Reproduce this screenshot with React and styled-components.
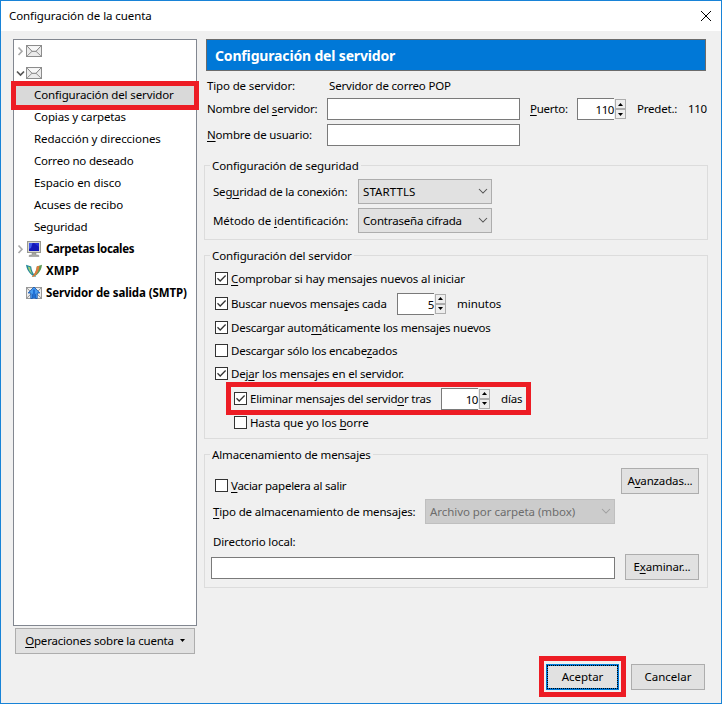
import React from 'react';
import styled, { createGlobalStyle } from 'styled-components';

const GlobalStyle = createGlobalStyle`
  * { box-sizing: border-box; }
  body { margin: 0; }
`;

const Window = styled.div`
  width: 722px;
  height: 704px;
  display: flex;
  flex-direction: column;
  background: #f0f0f0;
  border: 1px solid #1883d7;
  color: #000;
  font: 11.5px/16px 'Noto Sans', 'Open Sans', sans-serif;
  overflow: hidden;
`;

const TitleBar = styled.header`
  display: flex;
  justify-content: space-between;
  align-items: center;
  flex: none;
  height: 30px;
  padding: 0 9px 0 8px;
  background: #fff;
`;

const Text = styled.span`
  display: inline-block;
  flex: none;
  white-space: pre;
  letter-spacing: ${(p) => (p.$ls || 0) - 0.03}px;
  width: ${(p) => (p.$w ? `${p.$w}px` : 'auto')};
  margin-left: ${(p) => p.$ml || 0}px;
`;

const Key = styled.span`
  text-decoration: underline;
  text-decoration-thickness: 1px;
  text-underline-offset: 2px;
  text-decoration-skip-ink: none;
`;

const Content = styled.div`
  display: flex;
  flex: none;
  gap: 7px;
  height: 623px;
  padding: 8px 0 0 12px;
`;

const Sidebar = styled.nav`
  width: 184px;
  display: flex;
  flex-direction: column;
  gap: 2px;
`;

const Tree = styled.div`
  height: 587px;
  border: 1px solid #828790;
  background: #fff;
`;

const TreeRow = styled.div`
  position: relative;
  display: flex;
  align-items: center;
  height: 22px;
  padding-left: ${(p) => (p.$child ? 20 : 2)}px;
  background: ${(p) => (p.$selected ? '#d9d9d9' : 'transparent')};
  font-weight: ${(p) => (p.$strong ? 700 : 400)};
`;

const Twisty = styled.span`
  display: flex;
  width: 10px;
  height: 12px;
`;

const TreeIcon = styled.span`
  display: flex;
  width: 16px;
  height: 16px;
  margin-right: 4px;
`;

const Highlight = styled.div`
  position: absolute;
  inset: ${(p) => p.$inset};
  border: 5px solid #ed1c24;
  pointer-events: none;
`;

const Button = styled.button`
  position: relative;
  display: flex;
  align-items: center;
  justify-content: center;
  flex: none;
  width: ${(p) => p.$w}px;
  height: 26px;
  margin: 0 0 0 ${(p) => p.$ml || 0}px;
  padding: 0;
  border: ${(p) => (p.$focused ? '2px solid #0078d7' : '1px solid #adadad')};
  background: #e1e1e1;
  color: #000;
  font: inherit;
`;

const MenuArrow = styled.span`
  display: flex;
  margin: 0 0 1px 6px;
`;

const FocusRing = styled.span`
  position: absolute;
  inset: -1px;
  border: 1px dotted #000;
`;

const Main = styled.main`
  width: 504px;
`;

const Banner = styled.h1`
  display: flex;
  align-items: center;
  height: 32px;
  margin: 0 2px;
  padding: 2px 0 0 8px;
  border: 1px solid #6b6b6b;
  background: #0078d7;
  color: #fff;
  font-size: 14px;
  font-weight: 700;
  line-height: 20px;
`;

const Row = styled.div`
  position: relative;
  display: flex;
  align-items: ${(p) => p.$align || 'center'};
  height: ${(p) => p.$h}px;
  margin-top: ${(p) => p.$mt || 0}px;
  padding-left: ${(p) => p.$pl || 0}px;
`;

const Input = styled.input`
  flex: none;
  width: ${(p) => p.$w}px;
  height: 22px;
  margin: ${(p) => p.$mt || 0}px 0 0;
  padding: 0 3px;
  border: 1px solid #7a7a7a;
  border-radius: 0;
  background: #fff;
  font: inherit;
`;

const SpinnerBox = styled.span`
  display: flex;
  flex: none;
  align-items: center;
  gap: 1px;
  height: 22px;
`;

const SpinnerValue = styled.span`
  width: 37px;
  height: 22px;
  padding: 3px 0 0;
  border: 1px solid #7a7a7a;
  border-right: 0;
  background: #fff;
  text-align: right;
  letter-spacing: -0.4px;
`;

const SpinnerButtons = styled.span`
  display: flex;
  flex-direction: column;
`;

const SpinnerButton = styled.span`
  display: flex;
  align-items: center;
  justify-content: center;
  width: 11px;
  height: 10px;
  border: 1px solid #adadad;
  background: #eee;
`;

const Group = styled.section`
  height: ${(p) => p.$h}px;
  margin-top: ${(p) => p.$mt}px;
  border: 1px solid #dcdcdc;
`;

const Legend = styled.div`
  width: fit-content;
  height: 16px;
  margin: -8px 0 0 5px;
  padding: 0 2px;
  background: #f0f0f0;
`;

const SelectBox = styled.div`
  display: flex;
  align-items: center;
  justify-content: space-between;
  flex: none;
  width: ${(p) => p.$w}px;
  height: 25px;
  padding: 0 3px 0 4px;
  border: 1px solid ${(p) => (p.$disabled ? '#bfbfbf' : '#adadad')};
  background: ${(p) => (p.$disabled ? '#ccc' : '#e1e1e1')};
  color: ${(p) => (p.$disabled ? '#6d6d6d' : '#000')};
`;

const ChevronSlot = styled.span`
  display: flex;
  margin-bottom: 2px;
`;

const Box = styled.span`
  display: flex;
  flex: none;
  width: 13px;
  height: 13px;
  margin-right: 3px;
  border: 1px solid #333;
  background: #fff;
`;

const Footer = styled.footer`
  display: flex;
  justify-content: flex-end;
  gap: 12px;
  margin-top: 10px;
  padding-right: 16px;
`;

const FooterItem = styled.div`
  position: relative;
`;

const CloseIcon = () => (
  <svg width="12" height="12" viewBox="0 0 12 12">
    <path d="M1 1l10 10M11 1L1 11" stroke="#000" strokeWidth="1" fill="none" />
  </svg>
);

const TwistyIcon = ({ open }) => (
  <svg width="10" height="12" viewBox="0 0 10 12">
    {open ? (
      <path d="M1 4.5L4.5 8 8 4.5" stroke="#555" strokeWidth="1.7" fill="none" />
    ) : (
      <path d="M2.5 2.5L6 6.2 2.5 10" stroke="#a8a8a8" strokeWidth="1.6" fill="none" />
    )}
  </svg>
);

const MailIcon = () => (
  <svg width="16" height="16" viewBox="0 0 16 16">
    <rect x="0.5" y="2.5" width="15" height="11" fill="#ebebeb" stroke="#8c8c8c" />
    <path d="M1.2 3.2L6 8h4l4.800-4.800z" fill="#f7f7f7" />
    <path d="M1.200 3.200L6 8.300h4l4.800-5.100" fill="none" stroke="#808080" strokeWidth="1" />
    <path d="M1.200 12.800L6 8.300M14.800 12.800L10 8.300" stroke="#909090" strokeWidth="1" />
  </svg>
);

const ComputerIcon = () => (
  <svg width="16" height="16" viewBox="0 0 16 16">
    <rect x="1.5" y="0.5" width="13" height="11" fill="#d6d6cf" stroke="#9a9a92" />
    <rect x="3" y="2" width="10" height="8" fill="#1418b8" />
    <path d="M3 2h3.500l-1.500 5-2 1z" fill="#4058e8" />
    <path d="M8 2h5v4z" fill="#2430d8" />
    <path d="M6 12h4v2h2.500l.5 1.500H3l.5-1.500H6z" fill="#aaaaa5" stroke="#888" strokeWidth="0.5" />
  </svg>
);

const XmppIcon = () => (
  <svg width="16" height="16" viewBox="0 0 16 16">
    <path d="M0 1.800l5.200 1.800c.3 4 1.800 7.200 5 10.400C5.500 13.300 1 8.500 0 1.800z" fill="#23869a" />
    <path d="M1.800 3.500l2.400.8c.3 3 1.200 5.200 2.600 7.200C4.300 9.800 2.500 7 1.800 3.500z" fill="#9fcf73" />
    <path d="M16 1.800l-5.200 1.800c-.3 4-1.800 7.200-5 10.400C11 13.300 15.300 8.500 16 1.800z" fill="#5d9a55" />
    <path d="M10.800 3.600l2.600-.9c-.2 4.300-2 8-5.400 10.700l-2.200.6c3.200-3.200 4.700-6.400 5-10.400z" fill="#e4793c" />
  </svg>
);

const SmtpIcon = () => (
  <svg width="16" height="16" viewBox="0 0 16 16">
    <rect x="0.5" y="2.5" width="15" height="11" fill="#ececec" stroke="#999" />
    <path d="M.8 3L5 7M15.200 3L11 7M.8 13L5 9M15.200 13L11 9" stroke="#888" strokeWidth="0.9" />
    <path d="M8 2l5.800 6h-2.600v5.500H9.500V9.200h-3v4.300H4.800V8H2.200z" fill="#4da0f2" stroke="#1558b4" strokeWidth="0.9" />
    <path d="M8 4.500v9" stroke="#1f6fd6" strokeWidth="2.200" />
  </svg>
);

const CheckMark = () => (
  <svg width="11" height="11" viewBox="0 0 11 11">
    <path d="M1.500 5.300L4.200 8 9.600 2.500" stroke="#333" strokeWidth="1.250" fill="none" />
  </svg>
);

const Chevron = ({ color }) => (
  <svg width="10" height="6" viewBox="0 0 10 6">
    <path d="M1 1l4 4 4-4" stroke={color} strokeWidth="1.050" fill="none" />
  </svg>
);

const Arrow = ({ up }) => (
  <svg width="5" height="3" viewBox="0 0 5 3">
    <path d={up ? 'M0 3L2.500 0 5 3z' : 'M0 0h5L2.500 3z'} fill="#000" />
  </svg>
);

const Spinner = ({ value }) => (
  <SpinnerBox>
    <SpinnerValue>{value}</SpinnerValue>
    <SpinnerButtons>
      <SpinnerButton><Arrow up /></SpinnerButton>
      <SpinnerButton><Arrow /></SpinnerButton>
    </SpinnerButtons>
  </SpinnerBox>
);

const Select = ({ w, ls, disabled, children }) => (
  <SelectBox $w={w} $disabled={disabled}>
    <Text $ls={ls}>{children}</Text>
    <ChevronSlot><Chevron color={disabled ? '#9f9f9f' : '#505050'} /></ChevronSlot>
  </SelectBox>
);

const Checkbox = ({ checked, w, ls, children }) => (
  <>
    <Box>{checked && <CheckMark />}</Box>
    <Text $ls={ls} $w={w}>{children}</Text>
  </>
);

const sections = [
  ['Copias y carpetas', -0.12],
  ['Redacción y direcciones', -0.03],
  ['Correo no deseado', -0.18],
  ['Espacio en disco', -0.06],
  ['Acuses de recibo', -0.06],
  ['Seguridad', -0.2],
];

const accounts = [
  ['Carpetas locales', -0.32, ComputerIcon, true],
  ['XMPP', 0.1, XmppIcon, false],
  ['Servidor de salida (SMTP)', -0.08, SmtpIcon, false],
];

export default function App() {
  return (
    <>
      <GlobalStyle />
      <Window>
        <TitleBar>
          <Text $ls={-0.05}>Configuración de la cuenta</Text>
          <CloseIcon />
        </TitleBar>

        <Content>
          <Sidebar>
            <Tree>
              <TreeRow>
                <Twisty><TwistyIcon /></Twisty>
                <TreeIcon><MailIcon /></TreeIcon>
              </TreeRow>
              <TreeRow>
                <Twisty><TwistyIcon open /></Twisty>
                <TreeIcon><MailIcon /></TreeIcon>
              </TreeRow>
              <TreeRow $child $selected>
                <Text $ls={-0.09}>Configuración del servidor</Text>
                <Highlight $inset="-3px -3px -4px -3px" />
              </TreeRow>
              {sections.map(([name, ls]) => (
                <TreeRow key={name} $child>
                  <Text $ls={ls}>{name}</Text>
                </TreeRow>
              ))}
              {accounts.map(([name, ls, Icon, expandable]) => (
                <TreeRow key={name} $strong>
                  <Twisty>{expandable && <TwistyIcon />}</Twisty>
                  <TreeIcon><Icon /></TreeIcon>
                  <Text $ls={ls}>{name}</Text>
                </TreeRow>
              ))}
            </Tree>
            <Button $w={180} $ml={2}>
              <Text $ls={-0.16}><Key>O</Key>peraciones sobre la cuenta</Text>
              <MenuArrow><Arrow /></MenuArrow>
            </Button>
          </Sidebar>

          <Main>
            <Banner><Text $ls={-0.13}>Configuración del servidor</Text></Banner>

            <Row $h={22} $mt={4} $pl={3}>
              <Text $w={122} $ls={-0.11}>Tipo de servidor:</Text>
              <Text $ls={-0.15}>Servidor de correo POP</Text>
            </Row>
            <Row $h={22} $mt={1} $pl={3}>
              <Text $w={120} $ls={-0.17}>Nombre del <Key>s</Key>ervidor:</Text>
              <Input $w={193} />
              <Text $w={47} $ml={10} $ls={-0.21}><Key>P</Key>uerto:</Text>
              <Spinner value="110" />
              <Text $w={51} $ml={11} $ls={-0.17}>Predet.:</Text>
              <Text $ls={-0.35}>110</Text>
            </Row>
            <Row $h={22} $mt={4} $pl={3}>
              <Text $w={120} $ls={-0.14}><Key>N</Key>ombre de usuario:</Text>
              <Input $w={193} />
            </Row>

            <Group $h={75} $mt={19}>
              <Legend><Text $ls={-0.1}>Configuración de seguridad</Text></Legend>
              <Row $h={25} $mt={5} $pl={8}>
                <Text $w={145} $ls={-0.17}>Seg<Key>u</Key>ridad de la conexión:</Text>
                <Select w={134} ls={0.12}>STARTTLS</Select>
              </Row>
              <Row $h={25} $mt={4} $pl={8}>
                <Text $w={145} $ls={-0.03}>Método de <Key>i</Key>dentificación:</Text>
                <Select w={134} ls={-0.14}>Contraseña cifrada</Select>
              </Row>
            </Group>

            <Group $h={184} $mt={15}>
              <Legend><Text $ls={-0.09}>Configuración del servidor</Text></Legend>
              <Row $h={21} $mt={4} $pl={10}>
                <Checkbox checked ls={-0.11}><Key>C</Key>omprobar si hay mensajes nuevos al iniciar</Checkbox>
              </Row>
              <Row $h={23} $mt={3} $pl={10}>
                <Checkbox checked w={166} ls={-0.18}>Buscar nuevos mensa<Key>j</Key>es cada</Checkbox>
                <Spinner value="5" />
                <Text $ml={11} $ls={-0.01}>minutos</Text>
              </Row>
              <Row $h={21} $mt={2} $pl={10}>
                <Checkbox checked ls={-0.17}>Descargar auto<Key>m</Key>áticamente los mensajes nuevos</Checkbox>
              </Row>
              <Row $h={21} $mt={2} $pl={10}>
                <Checkbox ls={-0.18}>Descargar sólo los encabe<Key>z</Key>ados</Checkbox>
              </Row>
              <Row $h={21} $mt={2} $pl={10}>
                <Checkbox checked ls={-0.16}>Dej<Key>a</Key>r los mensajes en el servidor.</Checkbox>
              </Row>
              <Row $h={23} $mt={3} $pl={29}>
                <Checkbox checked w={191} ls={-0.2}>Eliminar mensajes del servid<Key>o</Key>r tras</Checkbox>
                <Spinner value="10" />
                <Text $ml={11} $ls={-0.12}>días</Text>
                <Highlight $inset="-5px 176px -5px 21px" />
              </Row>
              <Row $h={21} $mt={2} $pl={29}>
                <Checkbox ls={-0.12}>Hasta que yo los <Key>b</Key>orre</Checkbox>
              </Row>
            </Group>

            <Group $h={134} $mt={15}>
              <Legend><Text $ls={-0.11}>Almacenamiento de mensajes</Text></Legend>
              <Row $h={26} $mt={5} $pl={10} $align="flex-start">
                <Row $h={21} $mt={7}>
                  <Checkbox w={390} ls={-0.22}><Key>V</Key>aciar papelera al salir</Checkbox>
                </Row>
                <Button $w={78}><Text $ls={-0.12}>A<Key>v</Key>anzadas...</Text></Button>
              </Row>
              <Row $h={25} $mt={5} $pl={8}>
                <Text $w={212} $ls={-0.11}><Key>T</Key>ipo de almacenamiento de mensajes:</Text>
                <Select w={190} ls={-0.02} disabled>Archivo por carpeta (mbox)</Select>
              </Row>
              <Row $h={16} $mt={10} $pl={8}>
                <Text $ls={-0.09}>Directorio local:</Text>
              </Row>
              <Row $h={26} $mt={4} $pl={6} $align="flex-start">
                <Input $w={404} $mt={3} />
                <Button $w={74} $ml={10}><Text $ls={-0.08}>E<Key>x</Key>aminar...</Text></Button>
              </Row>
            </Group>
          </Main>
        </Content>

        <Footer>
          <FooterItem>
            <Button $w={73} $focused>
              <FocusRing />
              <Text $ls={0}>Aceptar</Text>
            </Button>
            <Highlight $inset="-8px -7px -7px -7px" />
          </FooterItem>
          <Button $w={74}><Text>Cancelar</Text></Button>
        </Footer>
      </Window>
    </>
  );
}
